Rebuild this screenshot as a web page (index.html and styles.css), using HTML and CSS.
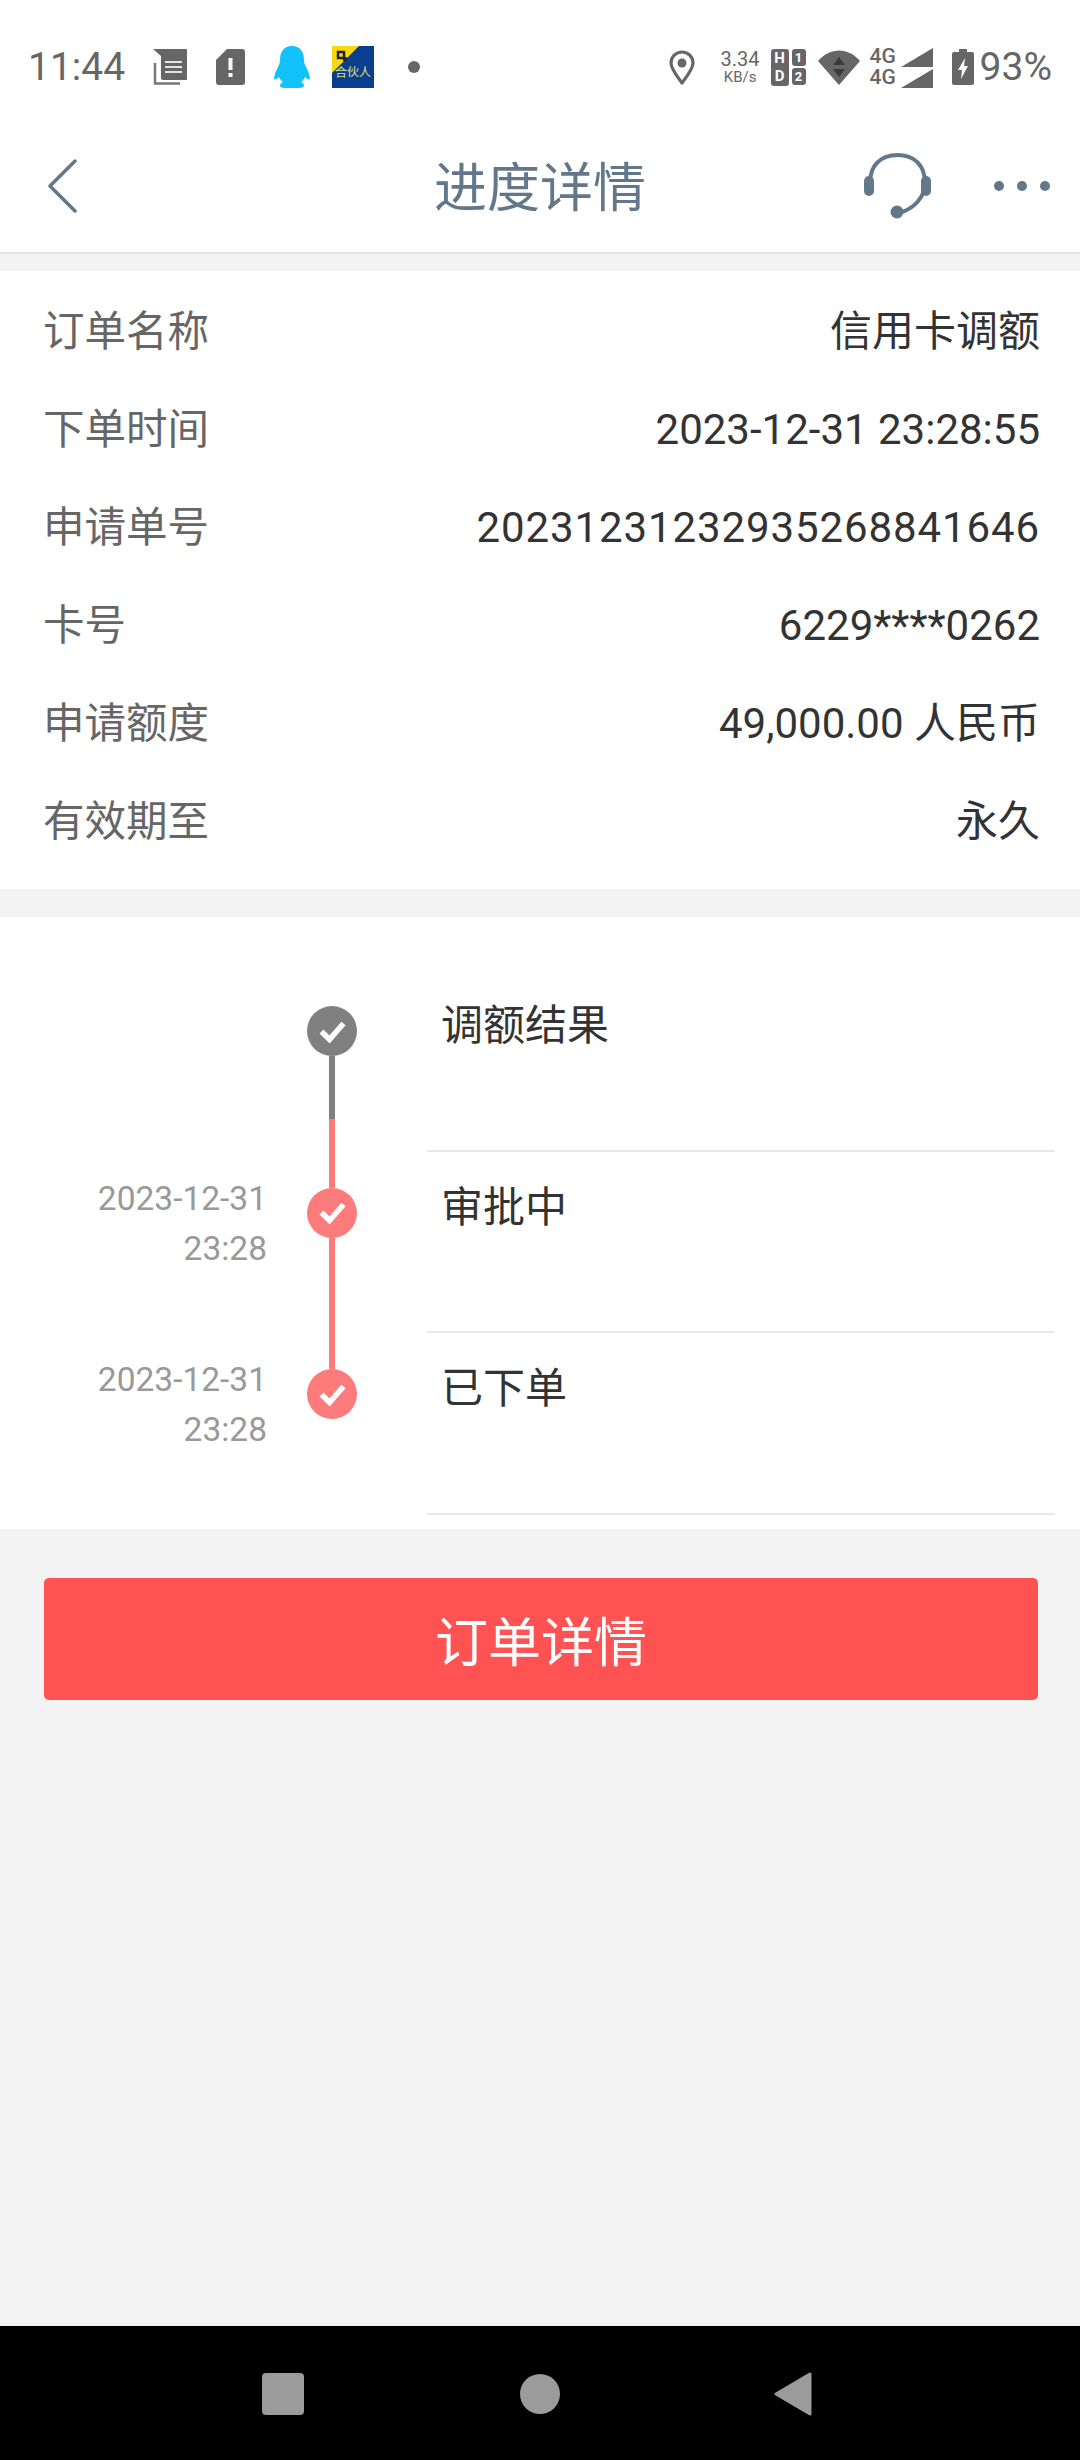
FILE: index.html
```html
<!DOCTYPE html>
<html lang="zh-CN">
<head>
    <meta charset="UTF-8">
    <meta name="viewport" content="width=device-width, initial-scale=1.0">
    <title>进度详情</title>
    <link rel="stylesheet" href="styles.css">
</head>
<body>
    <div class="status-bar">
        <div class="status-left">
            <span class="clock">11:44</span>
            <svg class="ic-msg" width="36" height="36" viewBox="0 0 36 36">
                <path d="M1 0H34a1 1 0 0 1 1 1V30a1 1 0 0 1-1 1H11a2 2 0 0 1-2-2V7z" fill="#666"/>
                <path d="M13 13H30M13 18H30M13 23H30" stroke="#e4e4e4" stroke-width="2"/>
                <path d="M3 14V34.500H28" fill="none" stroke="#777" stroke-width="2.500"/>
            </svg>
            <svg class="ic-sim" width="29" height="36" viewBox="0 0 29 36">
                <path d="M11 0H26a3 3 0 0 1 3 3V33a3 3 0 0 1-3 3H3a3 3 0 0 1-3-3V11z" fill="#666"/>
                <path d="M12.500 9H16.500V21H12.500zM12.500 24H16.500V28H12.500z" fill="#fff"/>
            </svg>
            <svg class="ic-qq" width="36" height="42" viewBox="0 0 36 42">
                <path d="M18 0C9 0 6 7 6 14C6 17 5 19 3 23C1 27 0 31 0 33C1 34 3 33 5 31C6 33 7 35 9 36C7 37 6 38 6 40C6 41 8 42 11 42H25C28 42 30 41 30 40C30 38 29 37 27 36C29 35 30 33 31 31C33 33 35 34 36 33C36 31 35 27 33 23C31 19 30 17 30 14C30 7 27 0 18 0Z" fill="#12c2fb"/>
            </svg>
            <svg class="ic-partner" width="42" height="42" viewBox="0 0 42 42">
                <rect width="42" height="42" fill="#0a3f8f"/>
                <path d="M0 0H27L0 27Z" fill="#f6d90f"/>
                <rect x="6" y="6" width="6" height="6" fill="none" stroke="#223" stroke-width="2.500"/>
                <rect x="11" y="11" width="4" height="4" fill="#223"/>
                <text x="3" y="31" class="partner-text">合伙人</text>
            </svg>
            <span class="dot"></span>
        </div>
        <div class="status-right">
            <svg class="ic-pin" width="26" height="35" viewBox="0 0 26 35">
                <path d="M13 33C8 26 2 19 2 13a11 11 0 0 1 22 0C24 19 18 26 13 33Z" fill="none" stroke="#666" stroke-width="3.200" stroke-linejoin="round"/>
                <circle cx="13" cy="13" r="4.500" fill="#666"/>
            </svg>
            <div class="speed"><span class="speed-num">3.34</span><span class="speed-unit">KB/s</span></div>
            <div class="hd">
                <div class="hd-big"><span>H</span><span>D</span></div>
                <div class="hd-col"><span class="hd-small">1</span><span class="hd-small">2</span></div>
            </div>
            <svg class="ic-wifi" width="42" height="35" viewBox="0 0 42 35">
                <path d="M0 11C12 -3 30 -3 42 11L21 35Z" fill="#666"/>
                <path d="M21 7L27 15H15ZM21 27L15 19H27Z" fill="#3a3a3a"/>
            </svg>
            <div class="signal">
                <div class="signal-row"><span>4G</span><svg width="32" height="19" viewBox="0 0 32 19"><path d="M0 19L32 0V19Z" fill="#666"/></svg></div>
                <div class="signal-row"><span>4G</span><svg width="32" height="19" viewBox="0 0 32 19"><path d="M0 19L32 0V19Z" fill="#666"/></svg></div>
            </div>
            <svg class="ic-batt" width="22" height="36" viewBox="0 0 22 36">
                <path d="M7 0H15V3H20a2 2 0 0 1 2 2V34a2 2 0 0 1-2 2H2a2 2 0 0 1-2-2V5a2 2 0 0 1 2-2H7Z" fill="#666"/>
                <path d="M13 9L6 21H10L9 30L16 17H12Z" fill="#fff"/>
            </svg>
            <span class="batt-pct">93%</span>
        </div>
    </div>

    <div class="nav-bar">
        <svg class="nav-back" width="30" height="54" viewBox="0 0 30 54">
            <path d="M28 2L3 27L28 52" fill="none" stroke="#62788a" stroke-width="3.500" stroke-linecap="round" stroke-linejoin="round"/>
        </svg>
        <h1 class="nav-title">进度详情</h1>
        <svg class="nav-headset" width="68" height="66" viewBox="0 0 68 66">
            <path d="M6 30C6 12 17 2 33.500 2C50 2 61 12 61 30C61 44 50 56 35 60" fill="none" stroke="#62788a" stroke-width="4"/>
            <rect x="0" y="23" width="10" height="20" rx="5" fill="#62788a"/>
            <rect x="57" y="23" width="10" height="20" rx="5" fill="#62788a"/>
            <circle cx="33" cy="59" r="6.500" fill="#62788a"/>
        </svg>
        <div class="nav-more"><span></span><span></span><span></span></div>
    </div>

    <div class="page">
        <section class="info">
            <div class="info-row"><span class="info-label">订单名称</span><span class="info-value">信用卡调额</span></div>
            <div class="info-row"><span class="info-label">下单时间</span><span class="info-value">2023-12-31 23:28:55</span></div>
            <div class="info-row"><span class="info-label">申请单号</span><span class="info-value info-long">20231231232935268841646</span></div>
            <div class="info-row"><span class="info-label">卡号</span><span class="info-value">6229****0262</span></div>
            <div class="info-row"><span class="info-label">申请额度</span><span class="info-value">49,000.00 人民币</span></div>
            <div class="info-row"><span class="info-label">有效期至</span><span class="info-value">永久</span></div>
        </section>

        <section class="timeline">
            <div class="step">
                <div class="step-time"></div>
                <div class="step-axis">
                    <div class="axis-top"></div>
                    <div class="axis-node node-gray">
                        <svg width="27" height="23" viewBox="0 0 27 23"><path d="M2.500 11.500L10.500 19.500L24.500 3.500" fill="none" stroke="#fff" stroke-width="5.500"/></svg>
                    </div>
                    <div class="axis-line line-change"></div>
                </div>
                <div class="step-title">调额结果</div>
            </div>
            <div class="step">
                <div class="step-time">2023-12-31<br>23:28</div>
                <div class="step-axis">
                    <div class="axis-top line-pink"></div>
                    <div class="axis-node node-pink">
                        <svg width="27" height="23" viewBox="0 0 27 23"><path d="M2.500 11.500L10.500 19.500L24.500 3.500" fill="none" stroke="#fff" stroke-width="5.500"/></svg>
                    </div>
                    <div class="axis-line line-pink"></div>
                </div>
                <div class="step-title">审批中</div>
            </div>
            <div class="step">
                <div class="step-time">2023-12-31<br>23:28</div>
                <div class="step-axis">
                    <div class="axis-top line-pink"></div>
                    <div class="axis-node node-pink">
                        <svg width="27" height="23" viewBox="0 0 27 23"><path d="M2.500 11.500L10.500 19.500L24.500 3.500" fill="none" stroke="#fff" stroke-width="5.500"/></svg>
                    </div>
                </div>
                <div class="step-title">已下单</div>
            </div>
        </section>

        <button class="detail-btn">订单详情</button>
    </div>

    <div class="sys-nav">
        <span class="sys-square"></span>
        <span class="sys-circle"></span>
        <svg class="sys-back" width="38" height="44" viewBox="0 0 38 44">
            <path d="M36 2V42L2 22Z" fill="#9b9b9b" stroke="#9b9b9b" stroke-width="3" stroke-linejoin="round"/>
        </svg>
    </div>
</body>
</html>
```

FILE: styles.css
```css
* {
    box-sizing: border-box;
}
html,
body {
    margin: 0;
    padding: 0;
}
body {
    width: 1080px;
    height: 2460px;
    display: flex;
    flex-direction: column;
    background: #fff;
    font-family: Roboto, "Noto Sans CJK SC", sans-serif;
    color: #333;
}

/* status bar */
.status-bar {
    height: 122px;
    padding: 46px 28px 0 28px;
    display: flex;
    justify-content: space-between;
    align-items: flex-start;
    color: #666;
}
.status-left,
.status-right {
    display: flex;
    align-items: center;
    height: 42px;
}
.clock {
    font-size: 39px;
    line-height: 42px;
    width: 96px;
}
.ic-msg {
    margin-left: 28px;
}
.ic-sim {
    margin-left: 28px;
}
.ic-qq {
    margin-left: 29px;
}
.ic-partner {
    margin-left: 22px;
}
.partner-text {
    font-family: "Noto Sans CJK SC", sans-serif;
    font-size: 12px;
    fill: #dfe27a;
}
.dot {
    width: 12px;
    height: 12px;
    border-radius: 50%;
    background: #666;
    margin-left: 34px;
}
.speed {
    margin-left: 25px;
    display: flex;
    flex-direction: column;
    align-items: center;
    width: 41px;
}
.speed-num {
    font-size: 20px;
    line-height: 20px;
}
.speed-unit {
    font-size: 15px;
    line-height: 16px;
}
.hd {
    margin-left: 10px;
    width: 35px;
    height: 37px;
    display: flex;
    gap: 3px;
}
.hd-big {
    width: 18px;
    height: 37px;
    background: #666;
    border-radius: 3px;
    display: flex;
    flex-direction: column;
    align-items: center;
    color: #fff;
    font-size: 15px;
    font-weight: 700;
    line-height: 18px;
}
.hd-col {
    display: flex;
    flex-direction: column;
    gap: 2px;
}
.hd-small {
    width: 14px;
    height: 17px;
    background: #666;
    border-radius: 3px;
    color: #fff;
    font-size: 13px;
    font-weight: 700;
    line-height: 17px;
    text-align: center;
}
.ic-wifi {
    margin-left: 12px;
}
.signal {
    margin-left: 10px;
    display: flex;
    flex-direction: column;
}
.signal-row {
    display: flex;
    align-items: flex-end;
    height: 21px;
    font-size: 21px;
    line-height: 21px;
    font-weight: 500;
}
.signal-row span {
    width: 31px;
}
.ic-batt {
    margin-left: 19px;
}
.batt-pct {
    margin-left: 6px;
    font-size: 39px;
    line-height: 42px;
}

/* title bar */
.nav-bar {
    height: 132px;
    padding: 0 30px 3px 47px;
    border-bottom: 2px solid #e5e5e5;
    display: flex;
    align-items: center;
}
.nav-title {
    flex: 1;
    margin: 0;
    padding: 0 0 3px 139px;
    font-size: 53px;
    font-weight: 400;
    text-align: center;
    color: #62788a;
}
.nav-headset {
    flex: none;
}
.nav-more {
    margin-left: 62px;
    display: flex;
    gap: 13px;
}
.nav-more span {
    width: 10px;
    height: 10px;
    border-radius: 50%;
    background: #62788a;
}

/* page body */
.page {
    flex: 1;
    background: #f3f3f3;
    padding-top: 17px;
}
.info {
    background: #fff;
    padding: 12px 40px 18px 43px;
}
.info-row {
    height: 98px;
    display: flex;
    justify-content: space-between;
    align-items: center;
    line-height: 58px;
}
.info-label {
    color: #666;
    font-size: 41.500px;
}
.info-value {
    color: #333;
    font-size: 42px;
}
.info-long {
    letter-spacing: 0.9px;
}

/* timeline */
.timeline {
    margin-top: 28px;
    background: #fff;
    padding: 53px 25px 14px 0;
}
.step {
    height: 181.500px;
    display: flex;
}
.step-time {
    width: 267px;
    margin-right: -1px;
    padding-top: 22px;
    font-size: 33.500px;
    line-height: 50px;
    text-align: right;
    color: #999;
}
.step-axis {
    width: 132px;
    display: flex;
    flex-direction: column;
    align-items: center;
}
.axis-top {
    width: 6px;
    height: 36px;
    flex: none;
}
.axis-node {
    width: 50px;
    height: 50px;
    flex: none;
    border-radius: 50%;
    display: flex;
    align-items: center;
    justify-content: center;
}
.axis-line {
    width: 6px;
    flex: 1;
}
.node-gray {
    background: #808080;
}
.node-pink {
    background: #fd7b7b;
}
.line-pink {
    background: #fd7b7b;
}
.line-change {
    background: linear-gradient(#808080 0, #808080 63px, #fd7b7b 63px);
}
.step-title {
    flex: 1;
    margin-left: 29px;
    padding: 27px 0 0 14px;
    border-bottom: 2px solid #e8e8e8;
    font-size: 42px;
    line-height: 58px;
    color: #333;
}

.detail-btn {
    display: block;
    width: 994px;
    height: 122px;
    margin: 49px 0 0 44px;
    background: #ff5252;
    border: none;
    border-radius: 5px;
    color: #fff;
    font-family: inherit;
    font-size: 53px;
}

/* android nav */
.sys-nav {
    height: 134px;
    background: #000;
    padding: 2px 0 0 262px;
    display: flex;
    align-items: center;
}
.sys-square {
    width: 42px;
    height: 42px;
    border-radius: 4px;
    background: #9b9b9b;
}
.sys-circle {
    width: 40px;
    height: 40px;
    margin-left: 216px;
    border-radius: 50%;
    background: #9b9b9b;
}
.sys-back {
    margin-left: 214px;
}
```
